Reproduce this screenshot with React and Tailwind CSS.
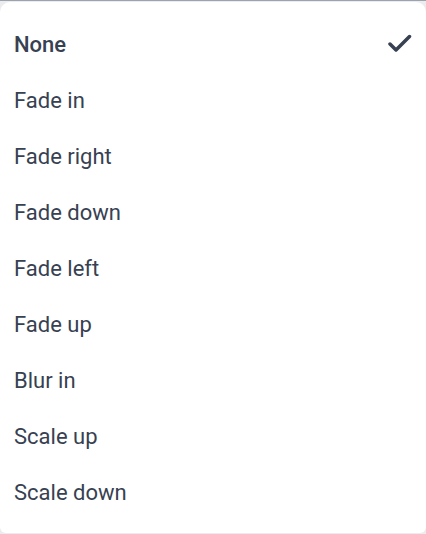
import React from 'react';

const options = ['None', 'Fade in', 'Fade right', 'Fade down', 'Fade left', 'Fade up', 'Blur in', 'Scale up', 'Scale down'];

export default function App() {
  const selected = 'None';
  return (
    <div className="h-[534px] w-[426px] overflow-hidden bg-[#ececee] font-['Roboto',sans-serif]">
      <div className="h-[1px] bg-[#9ca3af]" />
      <div className="mt-[1px] h-[531px] rounded-t-[10px] rounded-b-[6px] bg-white pt-[14px]">
        <ul>
          {options.map((opt) => (
            <li key={opt} className="flex h-[56px] items-center justify-between pl-[14px] pr-[14px]">
              <span className={`text-[22px] text-[#374151] ${opt === selected ? 'font-medium' : 'font-normal'}`}>{opt}</span>
              {opt === selected && (
                <svg width="24" height="24" viewBox="0 0 24 24" fill="none" stroke="#374151" strokeWidth="3.5" strokeLinecap="round" strokeLinejoin="round">
                  <path d="M2 12 8 18 21.5 4.5" />
                </svg>
              )}
            </li>
          ))}
        </ul>
      </div>
    </div>
  );
}
